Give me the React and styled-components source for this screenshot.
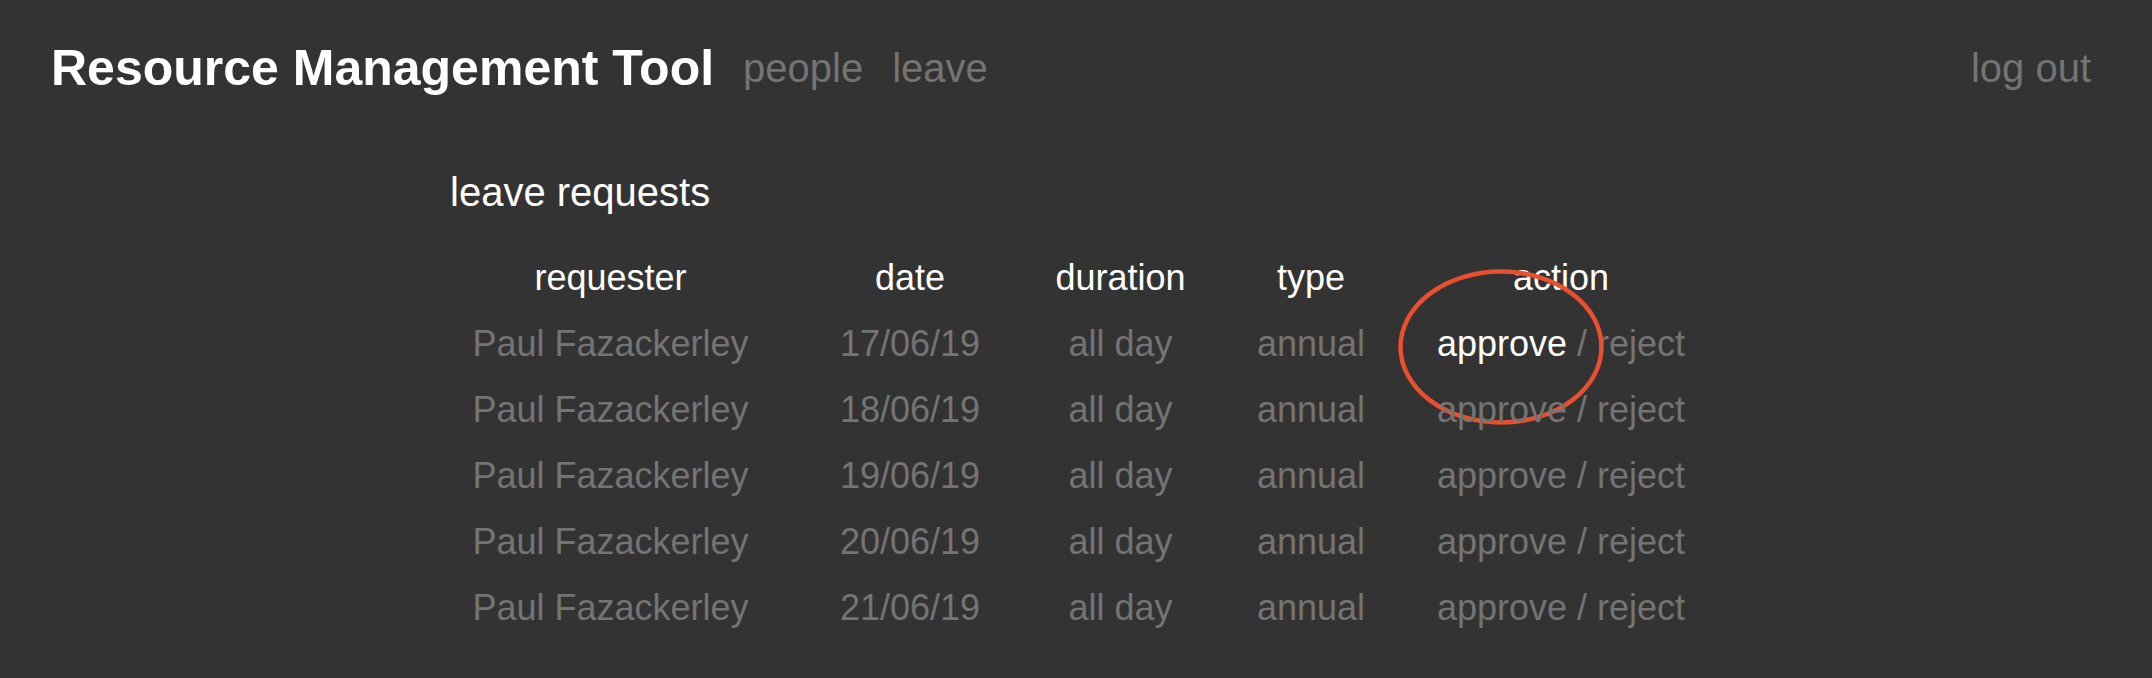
import styled, { createGlobalStyle } from "styled-components"

const GlobalStyle = createGlobalStyle`
body {
  margin: 0;
  background: #333333;
  font-family: "Liberation Sans", Arial, Helvetica, sans-serif;
}
`

const Page = styled.div`
min-height: 678px;
background: #333333;
color: #747474;
`

const Header = styled.header`
display: flex;
align-items: stretch;
padding: 40px 61px 0 51px;
line-height: 56px;
`

const Title = styled.h1`
margin: 0 29px 0 0;
font-size: 50px;
font-weight: 700;
color: #ffffff;
`

const Nav = styled.nav`
display: flex;
gap: 29px;
flex: 1;
`

const NavLink = styled.a`
font-size: 40px;
color: #747474;
text-decoration: none;
cursor: pointer;
`

const Main = styled.main`
padding: 72px 0 0 450px;
`

const Heading = styled.h2`
margin: 0 0 29px;
font-size: 40px;
line-height: 48px;
font-weight: 400;
color: #ffffff;
`

const Table = styled.div`
display: grid;
grid-template-columns: 321px 278px 143px 238px 262px;
font-size: 36px;
line-height: 66px;
`

const Row = styled.div`
display: contents;
`

const Cell = styled.div`
position: relative;
text-align: center;
white-space: nowrap;
color: ${p => (p.$head ? "#ffffff" : "#747474")};
`

const Action = styled.span`
color: ${p => (p.$active ? "#ffffff" : "#747474")};
cursor: pointer;
`

const Ring = styled.svg`
position: absolute;
left: -32px;
top: -42px;
width: 206px;
height: 156px;
overflow: visible;
pointer-events: none;
`

const requests = ["17/06/19", "18/06/19", "19/06/19", "20/06/19", "21/06/19"].map(date => ({
  name: "Paul Fazackerley",
  date,
  duration: "all day",
  type: "annual",
}))

const App = () => {
  return (
    <Page>
      <GlobalStyle />
      <Header>
        <Title>Resource Management Tool</Title>
        <Nav>
          <NavLink>people</NavLink>
          <NavLink>leave</NavLink>
        </Nav>
        <NavLink>log out</NavLink>
      </Header>
      <Main>
        <Heading>leave requests</Heading>
        <Table>
          <Row>
            <Cell $head>requester</Cell>
            <Cell $head>date</Cell>
            <Cell $head>duration</Cell>
            <Cell $head>type</Cell>
            <Cell $head>action</Cell>
          </Row>
          {requests.map((r, i) => (
            <Row key={r.date}>
              <Cell>{r.name}</Cell>
              <Cell>{r.date}</Cell>
              <Cell>{r.duration}</Cell>
              <Cell>{r.type}</Cell>
              <Cell>
                <Action $active={i === 0}>approve</Action> / <Action>reject</Action>
                {i === 0 && (
                  <Ring viewBox="0 0 206 156">
                    <ellipse cx="103" cy="78" rx="100.5" ry="75.5" fill="none" stroke="#e8502f" strokeWidth="4.5" />
                  </Ring>
                )}
              </Cell>
            </Row>
          ))}
        </Table>
      </Main>
    </Page>
  )
}

export default App
